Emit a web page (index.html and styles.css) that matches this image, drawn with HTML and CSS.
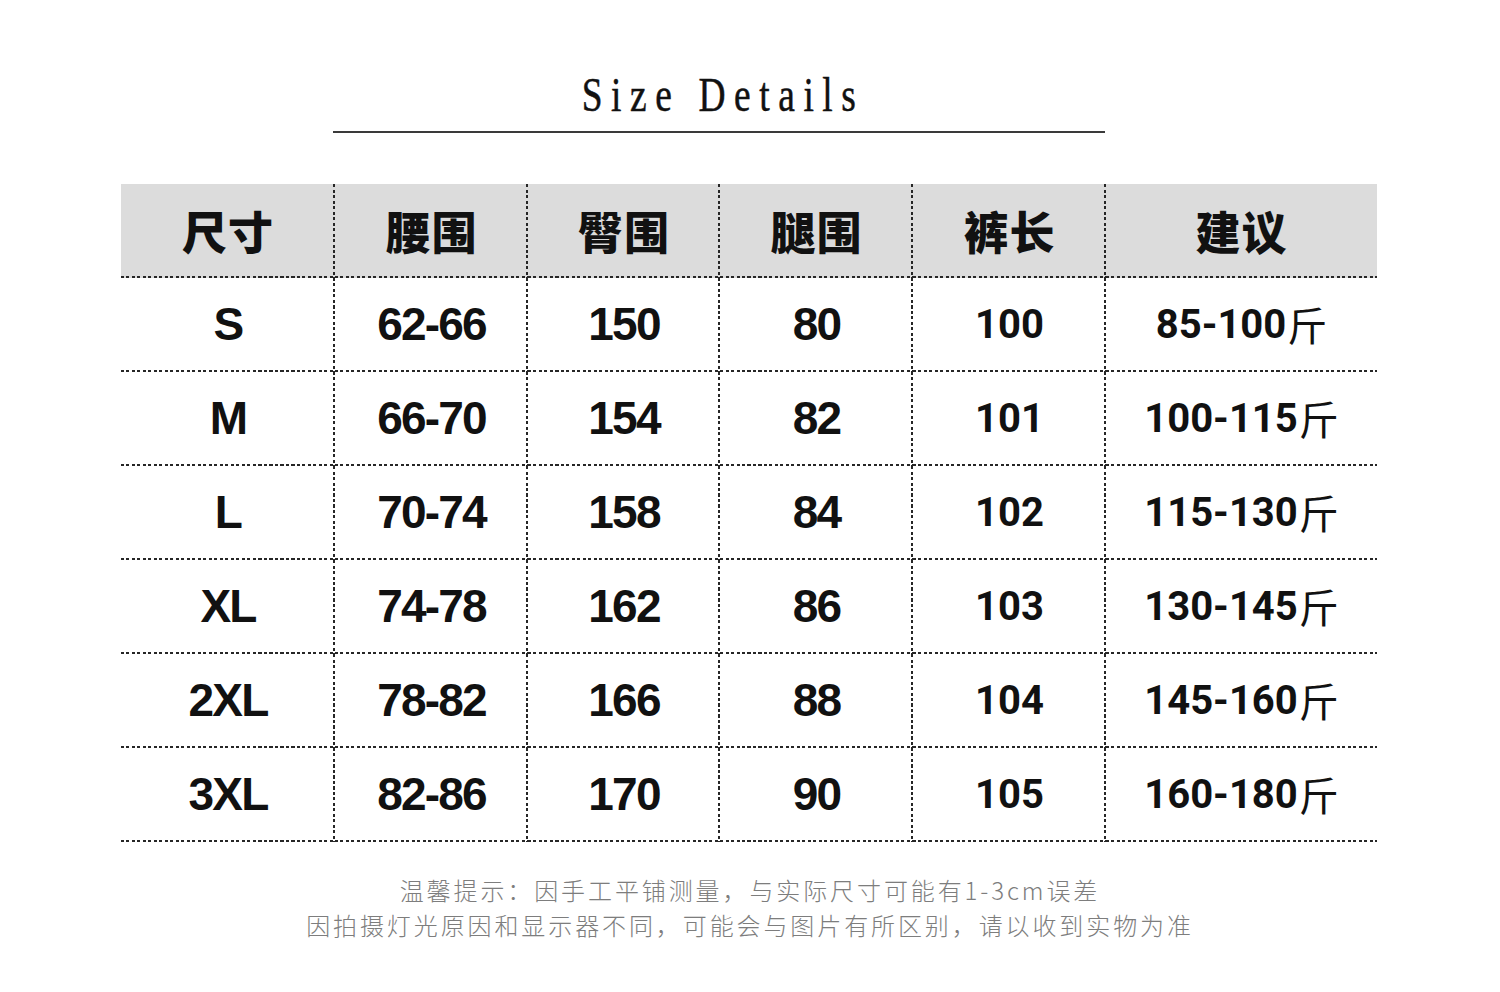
FILE: index.html
```html
<!DOCTYPE html>
<html lang="zh">
<head>
<meta charset="utf-8">
<title>Size Details</title>
<link rel="stylesheet" href="styles.css">
</head>
<body>
<div class="page">
  <div class="title-wrap">
    <h1 class="title"><span class="title-text">Size Details</span></h1>
  </div>
  <div class="table">
    <div class="cell head">尺寸</div>
    <div class="cell head">腰围</div>
    <div class="cell head">臀围</div>
    <div class="cell head">腿围</div>
    <div class="cell head">裤长</div>
    <div class="cell head last">建议</div>

    <div class="cell size">S</div>
    <div class="cell num">62-66</div>
    <div class="cell num">150</div>
    <div class="cell num">80</div>
    <div class="cell din">100</div>
    <div class="cell din last">85-100<span class="jin">斤</span></div>

    <div class="cell size">M</div>
    <div class="cell num">66-70</div>
    <div class="cell num">154</div>
    <div class="cell num">82</div>
    <div class="cell din">101</div>
    <div class="cell din last">100-115<span class="jin">斤</span></div>

    <div class="cell size">L</div>
    <div class="cell num">70-74</div>
    <div class="cell num">158</div>
    <div class="cell num">84</div>
    <div class="cell din">102</div>
    <div class="cell din last">115-130<span class="jin">斤</span></div>

    <div class="cell size">XL</div>
    <div class="cell num">74-78</div>
    <div class="cell num">162</div>
    <div class="cell num">86</div>
    <div class="cell din">103</div>
    <div class="cell din last">130-145<span class="jin">斤</span></div>

    <div class="cell size">2XL</div>
    <div class="cell num">78-82</div>
    <div class="cell num">166</div>
    <div class="cell num">88</div>
    <div class="cell din">104</div>
    <div class="cell din last">145-160<span class="jin">斤</span></div>

    <div class="cell size">3XL</div>
    <div class="cell num">82-86</div>
    <div class="cell num">170</div>
    <div class="cell num">90</div>
    <div class="cell din">105</div>
    <div class="cell din last">160-180<span class="jin">斤</span></div>
  </div>
  <div class="note">
    <p>温馨提示：因手工平铺测量，与实际尺寸可能有1-3cm误差</p>
    <p>因拍摄灯光原因和显示器不同，可能会与图片有所区别，请以收到实物为准</p>
  </div>
</div>
</body>
</html>
```

FILE: styles.css
```css
html, body {
  margin: 0;
  padding: 0;
  background: #ffffff;
}

.page {
  width: 1500px;
  height: 992px;
  display: flex;
  flex-direction: column;
  background: #ffffff;
}

.title-wrap {
  margin-left: 333px;
  width: 772px;
  padding-top: 66px;
  padding-bottom: 9px;
  border-bottom: 2px solid #3a3a3a;
}

.title {
  margin: 0;
  height: 56px;
  line-height: 56px;
  text-align: center;
  font-family: "Liberation Serif", "DejaVu Serif", serif;
  font-weight: 400;
  font-size: 48px;
  color: #111111;
}

.title-text {
  display: inline-block;
  letter-spacing: 11px;
  padding-left: 11px;
  transform: scaleX(0.78) translateY(1px);
  -webkit-text-stroke: 0.5px #111111;
}

.table {
  margin-top: 51px;
  margin-left: 121px;
  width: 1256px;
  display: grid;
  grid-template-columns: 214px 193px 192px 193px 193px 271px;
  grid-auto-rows: 94px;
}

.cell {
  box-sizing: border-box;
  display: flex;
  align-items: center;
  justify-content: center;
  color: #111111;
  padding-bottom: 2px;
  background-image:
    repeating-linear-gradient(90deg, #262626 0 3px, transparent 3px 5.5px),
    repeating-linear-gradient(180deg, #262626 0 3px, transparent 3px 5.5px);
  background-size: 100% 2px, 2px 100%;
  background-position: left bottom, right top;
  background-repeat: no-repeat;
}

.cell.last {
  background-image:
    repeating-linear-gradient(90deg, #262626 0 3px, transparent 3px 5.5px);
  background-size: 100% 2px;
  background-position: left bottom;
}

.head {
  background-color: #dcdcdc;
  font-family: "Noto Sans CJK SC", "Noto Sans", sans-serif;
  font-weight: 900;
  font-size: 45px;
  letter-spacing: 1px;
}

.size,
.num {
  font-family: "Liberation Sans", Arial, sans-serif;
  font-weight: 700;
  font-size: 46px;
  letter-spacing: -1.8px;
}

.din {
  font-family: Roboto, "Liberation Sans", sans-serif;
  font-weight: 700;
  font-size: 40px;
  letter-spacing: 0;
}

.jin {
  font-family: "Noto Sans CJK SC", sans-serif;
  font-weight: 400;
  font-size: 40px;
  margin-left: 1px;
}

.note {
  margin-top: 30px;
  text-align: center;
  font-family: "Noto Sans CJK SC", "Noto Sans", sans-serif;
  font-weight: 300;
  font-size: 24px;
  line-height: 35px;
  letter-spacing: 2.9px;
  color: #7d7d7d;
}

.note p {
  margin: 0;
}
```
